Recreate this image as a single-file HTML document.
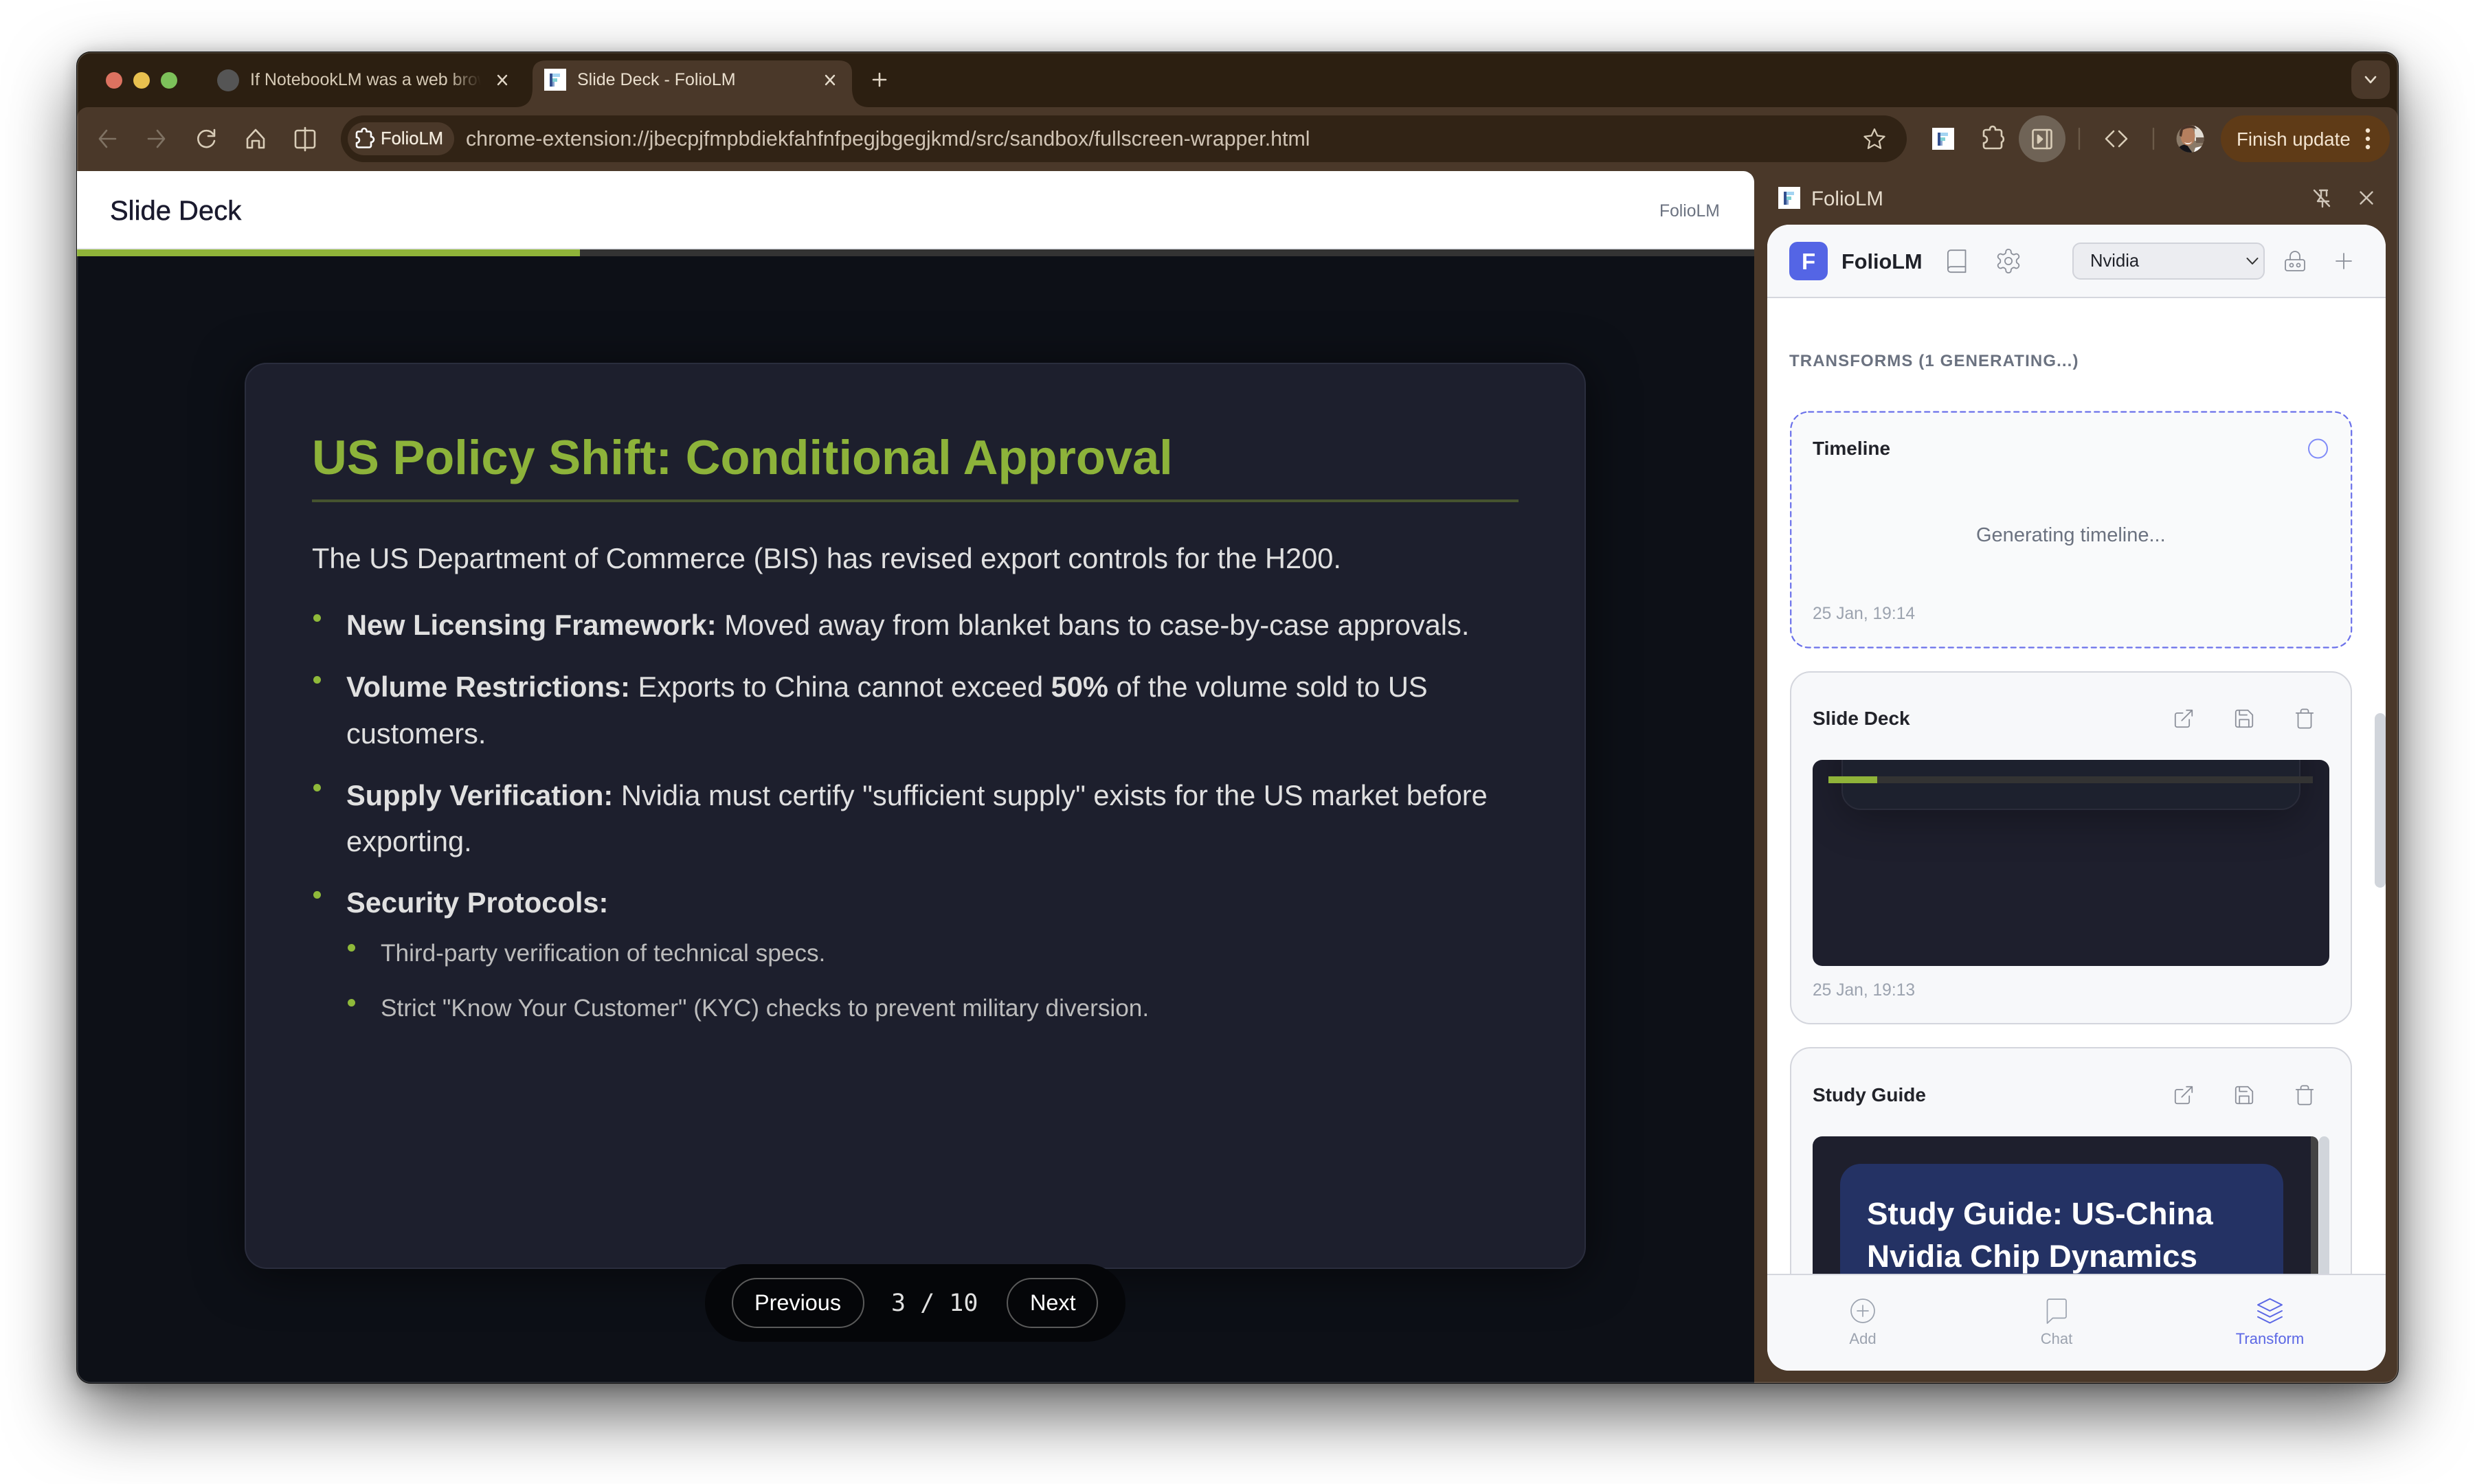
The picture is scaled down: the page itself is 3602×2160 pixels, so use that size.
<!DOCTYPE html>
<html lang="en"><head><meta charset="utf-8"><title>Slide Deck - FolioLM</title>
<style>
*{box-sizing:border-box;margin:0;padding:0}
html,body{width:3602px;height:2160px;background:#fff;overflow:hidden;font-family:"Liberation Sans",Arial,sans-serif}
.a{position:absolute}
.t{position:absolute;white-space:nowrap;line-height:1}
#win{position:absolute;left:112px;top:75px;width:3378px;height:1938px;border-radius:20px;overflow:hidden;background:#2c1f11;box-shadow:0 44px 100px rgba(0,0,0,.62),0 4px 24px rgba(0,0,0,.28)}
#in{position:absolute;left:-112px;top:-75px;width:3602px;height:2160px}
#edge{position:absolute;left:111px;top:75px;width:3380px;height:1939px;border-radius:21px;border:1.5px solid #111;box-shadow:inset 0 0 0 1.5px rgba(255,255,255,.16);pointer-events:none;z-index:30}
.bd{font-size:41.6px;color:#e0e0e0}
.bd b{font-weight:700}
.sub{font-size:35.2px;color:#bcbcbc}
.dot{position:absolute;width:11px;height:11px;border-radius:50%;background:#8fb93a}
.btn{position:absolute;border:2px solid #5a5a5a;border-radius:40px;height:73px;top:1860px}
.card{position:absolute;left:2605px;width:818px;border:2px solid #d4d6dd;border-radius:30px;background:#f7f8fa}
.ttl{font-size:28px;font-weight:700;color:#22232a}
.dt{font-size:24.6px;color:#9ca3af}
.lb{font-size:22px;color:#9ca3af;transform:translateX(-50%)}
</style></head><body>
<div id="win"><div id="in">
  <div class="a" style="left:112px;top:156px;width:3378px;height:100px;background:#4a3829;border-radius:16px 16px 0 0"></div>
  <div class="a" style="left:112px;top:240px;width:3378px;height:1780px;background:#4a3829"></div>

  <div class="a" style="left:3422px;top:88px;width:56px;height:56px;border-radius:16px;background:#4a3829"></div>

  <svg class="a" style="left:0;top:0" width="3602" height="200" viewBox="0 0 3602 200"><path d="M750 156Q775 156 775 128V106Q775 88 795 88H1220Q1240 88 1240 106V128Q1240 156 1265 156Z" fill="#4a3829"/></svg>

  <!-- omnibox -->
  <div class="a" style="left:496px;top:168px;width:2279px;height:68px;border-radius:34px;background:#312315"></div>
  <div class="a" style="left:506px;top:178px;width:155px;height:48px;border-radius:24px;background:#4a3829"></div>
  <div class="t" style="left:554px;top:190px;font-size:25.6px;color:#f3ebdd;-webkit-text-stroke:.3px #f3ebdd">FolioLM</div>
  <div class="t" style="left:678px;top:188px;font-size:30.36px;color:#cfc3b4">chrome-extension://jbecpjfmpbdiekfahfnfpegjbgegjkmd/src/sandbox/fullscreen-wrapper.html</div>

  <div class="a" style="left:2938px;top:168px;width:68px;height:68px;border-radius:50%;background:#6f6356"></div>
  <div class="a" style="left:3232px;top:168px;width:246px;height:68px;border-radius:34px;background:#5f3b17"></div>
  <div class="t" style="left:3255px;top:188.6px;font-size:27.6px;color:#f3e4d0">Finish update</div>

  <!-- tabs text -->
  <div class="t" style="left:364px;top:104px;width:336px;overflow:hidden;font-size:25px;color:#d6cab6;-webkit-mask-image:linear-gradient(90deg,#000 86%,transparent)">If NotebookLM was a web browser</div>
  <div class="t" style="left:840px;top:104px;font-size:25px;color:#eadfce">Slide Deck - FolioLM</div>

  <!-- main -->
  <div class="a" style="left:112px;top:249px;width:2441px;height:1780px;background:#0d1017;border-radius:0 16px 0 0;overflow:hidden">
    <div class="a" style="left:0;top:0;width:2441px;height:114px;background:#fff;border-bottom:2px solid #e5e7eb"></div>
    <div class="a" style="left:0;top:114px;width:2441px;height:10px;background:#333"></div>
    <div class="a" style="left:0;top:114px;width:732px;height:10px;background:#8fb339"></div>
  </div>
  <div class="t" style="left:160px;top:287px;font-size:40px;color:#1a1a2e;-webkit-text-stroke:.5px #1a1a2e">Slide Deck</div>
  <div class="t" style="left:2415px;top:296px;font-size:24.7px;color:#6b7280">FolioLM</div>

  <!-- slide -->
  <div class="a" style="left:356px;top:528px;width:1952px;height:1319px;border-radius:32px;background:#1d1f2d;border:2px solid #2a2d3d;box-shadow:0 8px 70px rgba(0,0,0,.55)"></div>
  <div class="t" style="left:454px;top:631.4px;font-size:70.4px;font-weight:700;color:#8db33a">US Policy Shift: Conditional Approval</div>
  <div class="a" style="left:454px;top:727px;width:1756px;height:4px;background:#46532f"></div>
  <div class="t bd" style="left:454px;top:791.8px">The US Department of Commerce (BIS) has revised export controls for the H200.</div>

  <div class="dot" style="left:456px;top:894px"></div>
  <div class="t bd" style="left:504px;top:888.8px"><b>New Licensing Framework:</b> Moved away from blanket bans to case-by-case approvals.</div>
  <div class="dot" style="left:456px;top:984px"></div>
  <div class="t bd" style="left:504px;top:978.8px"><b>Volume Restrictions:</b> Exports to China cannot exceed <b>50%</b> of the volume sold to US</div>
  <div class="t bd" style="left:504px;top:1046.8px">customers.</div>
  <div class="dot" style="left:456px;top:1141px"></div>
  <div class="t bd" style="left:504px;top:1136.8px"><b>Supply Verification:</b> Nvidia must certify "sufficient supply" exists for the US market before</div>
  <div class="t bd" style="left:504px;top:1203.8px">exporting.</div>
  <div class="dot" style="left:456px;top:1297px"></div>
  <div class="t bd" style="left:504px;top:1292.8px"><b>Security Protocols:</b></div>
  <div class="dot" style="left:506px;top:1374px"></div>
  <div class="t sub" style="left:554px;top:1370px">Third-party verification of technical specs.</div>
  <div class="dot" style="left:506px;top:1454px"></div>
  <div class="t sub" style="left:554px;top:1450px">Strict "Know Your Customer" (KYC) checks to prevent military diversion.</div>

  <!-- slide nav -->
  <div class="a" style="left:1026px;top:1840px;width:612px;height:113px;border-radius:56px;background:#050609"></div>
  <div class="btn" style="left:1065px;width:193px"></div>
  <div class="btn" style="left:1465px;width:133px"></div>
  <div class="t" style="left:1098px;top:1880px;font-size:32.4px;color:#fff">Previous</div>
  <div class="t" style="left:1499px;top:1880px;font-size:32.4px;color:#fff">Next</div>
  <div class="t" style="left:1297px;top:1880px;font-family:'DejaVu Sans Mono',monospace;font-size:35px;color:#e0e0e0;white-space:pre">3 / 10</div>

  <!-- side panel head -->
  <div class="t" style="left:2636px;top:274.5px;font-size:29.5px;color:#e6dccc">FolioLM</div>

  <!-- panel -->
  <div class="a" style="left:2572px;top:327px;width:900px;height:1668px;border-radius:32px;overflow:hidden;background:#fff">
   <div class="a" style="left:-2572px;top:-327px;width:3602px;height:2160px">
    <div class="a" style="left:2572px;top:327px;width:900px;height:107px;background:#f7f8fa;border-bottom:2px solid #d5d7de"></div>
    <div class="a" style="left:2604px;top:352px;width:56px;height:56px;border-radius:12px;background:#5465e5"></div>
    <div class="t" style="left:2622px;top:364px;font-size:33px;font-weight:700;color:#fff">F</div>
    <div class="t" style="left:2680px;top:365.5px;font-size:30.7px;font-weight:700;color:#1f2128">FolioLM</div>
    <div class="a" style="left:3016px;top:353px;width:280px;height:54px;border-radius:12px;background:#ecedf1;border:2px solid #d1d3da"></div>
    <div class="t" style="left:3042px;top:368px;font-size:25.6px;color:#1f2128">Nvidia</div>

    <div class="t" style="left:2604px;top:514px;font-size:24px;font-weight:700;letter-spacing:1.12px;color:#6b7280">TRANSFORMS (1 GENERATING...)</div>

    <div class="a" style="left:2605px;top:599px;width:818px;height:344px;border-radius:28px;background:#f9fafb"></div>
    <div class="t ttl" style="left:2638px;top:639px">Timeline</div>
    <div class="t" style="left:2876px;top:764.6px;font-size:29px;color:#6b7280">Generating timeline...</div>
    <div class="t dt" style="left:2638px;top:881.5px">25 Jan, 19:14</div>

    <div class="card" style="top:977px;height:514px"></div>
    <div class="t ttl" style="left:2638px;top:1032px">Slide Deck</div>
    <div class="a" style="left:2638px;top:1106px;width:752px;height:300px;border-radius:14px;background:#1e1f2d;overflow:hidden">
      <div class="a" style="left:42px;top:-40px;width:668px;height:113px;border-radius:0 0 28px 28px;background:#1d212e;border:2px solid #2a2c3a;box-shadow:0 12px 60px rgba(0,0,0,.32)"></div>
      <div class="a" style="left:23px;top:24px;width:705px;height:10px;background:#333"></div>
      <div class="a" style="left:23px;top:24px;width:71px;height:10px;background:#8fb339"></div>
    </div>
    <div class="t dt" style="left:2638px;top:1430px">25 Jan, 19:13</div>

    <div class="a" style="left:3456px;top:1038px;width:16px;height:254px;border-radius:8px;background:#d1d5db"></div>

    <div class="card" style="top:1524px;height:520px"></div>
    <div class="t ttl" style="left:2638px;top:1580px">Study Guide</div>
    <div class="a" style="left:3375px;top:1654px;width:15px;height:260px;border-radius:8px 8px 0 0;background:#d1d5db"></div>
    <div class="a" style="left:2638px;top:1654px;width:736px;height:260px;border-radius:14px 10px 0 0;background:#1e1f2d;overflow:hidden">
      <div class="a" style="left:725px;top:0;width:11px;height:260px;background:#444"></div>
      <div class="a" style="left:40px;top:40px;width:645px;height:240px;border-radius:30px 30px 0 0;background:#243264"></div>
    </div>
    <div class="t" style="left:2717px;top:1744px;font-size:45.8px;font-weight:700;color:#fff">Study Guide: US-China</div>
    <div class="t" style="left:2717px;top:1806px;font-size:45.8px;font-weight:700;color:#fff">Nvidia Chip Dynamics</div>

    <div class="a" style="left:2572px;top:1854px;width:900px;height:142px;background:#f7f8fa;border-top:2px solid #d5d7de"></div>
    <div class="t lb" style="left:2711px;top:1938px">Add</div>
    <div class="t lb" style="left:2993px;top:1938px">Chat</div>
    <div class="t lb" style="left:3303.5px;top:1938px;color:#5b67e5">Transform</div>
   </div>
  </div>
</div></div>
<div id="edge"></div>

<svg class="a" style="left:0;top:0;z-index:40" width="3602" height="2160" viewBox="0 0 3602 2160" fill="none" stroke-linecap="round" stroke-linejoin="round">
  <!-- traffic lights -->
  <circle cx="166" cy="117" r="12" fill="#dc7260"/><circle cx="206" cy="117" r="12" fill="#e8c04f"/><circle cx="246" cy="117" r="12" fill="#7dc15a"/>
  <circle cx="332" cy="117" r="16" fill="#555"/>
  <!-- tab -->
  <path d="M725 110l12 13M737 110l-12 13" stroke="#e0d5c5" stroke-width="2.4"/>
  <path d="M1202 110l12 13M1214 110l-12 13" stroke="#e6dccc" stroke-width="2.4"/>
  <path d="M1280 107v18M1271 116h18" stroke="#e0d5c5" stroke-width="2.6"/>
  <g id="fav"><rect x="792" y="100" width="32" height="32" fill="#fff"/><rect x="800" y="107" width="4" height="19" fill="#34508f"/><rect x="804" y="107" width="11" height="5" fill="#a3d4f2"/><rect x="804" y="114" width="7" height="5" fill="#7fd0d4"/><rect x="804" y="119" width="3" height="7" fill="#8aa4d0"/></g>
  <path d="M3443 112l7 8 7-8" stroke="#e6dccc" stroke-width="2.6"/>
  <!-- nav icons -->
  <g stroke="#7f7263" stroke-width="2.6"><path d="M168 202H145M155 190L145 202L155 214"/><path d="M216 202H239M229 190L239 202L229 214"/></g>
  <g stroke="#d9cdb8" stroke-width="2.6">
    <path d="M310 195A12 12 0 1 0 312 205M312 189V198H303"/>
    <path d="M360 202L372 189L384 202V215H377V205H367V215H360Z"/>
    <rect x="430" y="190" width="28" height="25" rx="3"/><path d="M444 186V219"/>
    <path d="M2728 188l4.300 9.500 10.300 1.200-7.700 6.900 2.200 10.200-9.100-5.200-9.100 5.200 2.200-10.200-7.700-6.900 10.300-1.200z" stroke-width="2.200"/>
    <path d="M2887 192a3 3 0 0 1 3-3h6v-1a4 4 0 0 1 8 0v1h6a3 3 0 0 1 3 3v6a5 5 0 0 1 0 9v6a3 3 0 0 1-3 3h-20a3 3 0 0 1-3-3v-5a5 5 0 0 0 0-10z"/>
    <rect x="2958.500" y="189" width="27" height="27" rx="2.500"/><path d="M2979 189V216"/><path d="M2966 197l6 5.500-6 5.500z" fill="#d9cdb8"/>
    <path d="M3076 191L3065 202L3076 213M3084 191L3095 202L3084 213"/>
  </g>
  <path d="M519 194a2.500 2.500 0 0 1 2.500-2.500h5v-1a3.500 3.500 0 0 1 7 0v1h4a2.500 2.500 0 0 1 2.500 2.500v5a4 4 0 0 1 0 8v5a2.500 2.500 0 0 1-2.500 2.500h-16a2.500 2.500 0 0 1-2.500-2.500v-4a4 4 0 0 0 0-8z" stroke="#fff" stroke-width="2.600"/>
  <rect x="2812" y="186" width="32" height="32" fill="#fff"/><rect x="2820" y="193" width="4" height="19" fill="#34508f"/><rect x="2824" y="193" width="11" height="5" fill="#a3d4f2"/><rect x="2824" y="200" width="7" height="5" fill="#7fd0d4"/><rect x="2824" y="205" width="3" height="7" fill="#8aa4d0"/>
  <path d="M3026 187V217M3134 187V217" stroke="#6b5a48" stroke-width="2.400"/>
  <!-- avatar -->
  <clipPath id="av"><circle cx="3187.500" cy="202" r="20"/></clipPath>
  <g clip-path="url(#av)">
    <rect x="3167" y="182" width="41" height="41" fill="#8a7a68"/>
    <rect x="3194" y="183" width="14" height="22" fill="#e2ddd4"/>
    <rect x="3196" y="200" width="12" height="8" fill="#6b5a4c"/>
    <path d="M3168 224c0-10 6-13 14-14l10 14z" fill="#15151a"/>
    <path d="M3192 224l3-9 12-3 2 12z" fill="#f4f4f4"/>
    <ellipse cx="3184" cy="198" rx="10.500" ry="14" fill="#b57f5e"/>
    <path d="M3172 198c-1-11 6-16 13-16 6 0 10 2 12 6-6-3-15-2-20 1l-2 10z" fill="#4a3428"/>
    <path d="M3179 207c4 2 8 2 11-1-1 4-8 6-11 1z" fill="#fff"/>
  </g>
  <circle cx="3446" cy="190" r="3.200" fill="#f3e4d0"/><circle cx="3446" cy="202" r="3.200" fill="#f3e4d0"/><circle cx="3446" cy="214" r="3.200" fill="#f3e4d0"/>
  <!-- side head -->
  <rect x="2588" y="272" width="32" height="32" fill="#fff"/><rect x="2596" y="279" width="4" height="19" fill="#34508f"/><rect x="2600" y="279" width="11" height="5" fill="#a3d4f2"/><rect x="2600" y="286" width="7" height="5" fill="#7fd0d4"/><rect x="2600" y="291" width="3" height="7" fill="#8aa4d0"/>
  <g stroke="#cfc5b8" stroke-width="2.400">
    <path d="M3368 277L3390 300"/><path d="M3376 277h11M3378 277v9l-5 7h16M3386 277v8M3380 293v8"/>
    <path d="M3435.500 279.500l17 17M3452.500 279.500l-17 17"/>
  </g>
  <!-- panel icons -->
  <g transform="translate(2828.500,361) scale(1.6)" stroke="#8b8f99" stroke-width="1.150"><path d="M4 19.500v-15A2.500 2.500 0 0 1 6.500 2H20v20H6.500a2.500 2.500 0 0 1 0-5H20"/></g>
  <g transform="translate(2902.600,359.600) scale(1.7)" stroke="#8b8f99" stroke-width="1.050"><path d="M12.220 2h-.44a2 2 0 0 0-2 2v.18a2 2 0 0 1-1 1.730l-.43.25a2 2 0 0 1-2 0l-.15-.08a2 2 0 0 0-2.730.73l-.22.38a2 2 0 0 0 .73 2.730l.15.1a2 2 0 0 1 1 1.720v.51a2 2 0 0 1-1 1.740l-.15.09a2 2 0 0 0-.73 2.730l.22.38a2 2 0 0 0 2.730.73l.15-.08a2 2 0 0 1 2 0l.43.25a2 2 0 0 1 1 1.730V20a2 2 0 0 0 2 2h.44a2 2 0 0 0 2-2v-.18a2 2 0 0 1 1-1.730l.43-.25a2 2 0 0 1 2 0l.15.08a2 2 0 0 0 2.730-.73l.22-.39a2 2 0 0 0-.73-2.730l-.15-.08a2 2 0 0 1-1-1.740v-.5a2 2 0 0 1 1-1.740l.15-.09a2 2 0 0 0 .73-2.730l-.22-.38a2 2 0 0 0-2.730-.73l-.15.08a2 2 0 0 1-2 0l-.43-.25a2 2 0 0 1-1-1.730V4a2 2 0 0 0-2-2z"/><circle cx="12" cy="12" r="3"/></g>
  <path d="M3270.500 376l7.500 8 7.500-8" stroke="#333" stroke-width="2"/>
  <g stroke="#8b8f99" stroke-width="1.800">
    <rect x="3326" y="378" width="28" height="16" rx="3"/><path d="M3333 378v-5a7 7 0 0 1 14 0v5"/><circle cx="3335" cy="386" r="2.500"/><circle cx="3345" cy="386" r="2.500"/>
    <path d="M3411 369v22M3400 380h22"/>
  </g>
  <rect x="2606.200" y="599.500" width="816" height="343" rx="26" stroke="#6b71ea" stroke-width="2.200" stroke-dasharray="7 6"/>
  <circle cx="3373.500" cy="653" r="13.500" stroke="#818cf8" stroke-width="2"/>
  <!-- action icons -->
  <defs>
    <g id="ex"><path d="M18 13v6a2 2 0 0 1-2 2H5a2 2 0 0 1-2-2V8a2 2 0 0 1 2-2h6M15 3h6v6M10 14L21 3"/></g>
    <g id="sv"><path d="M19 21H5a2 2 0 0 1-2-2V5a2 2 0 0 1 2-2h11l5 5v11a2 2 0 0 1-2 2zM17 21v-8H7v8M7 3v5h8"/></g>
    <g id="tr"><path d="M3 6h18M19 6v14a2 2 0 0 1-2 2H7a2 2 0 0 1-2-2V6m3 0V4a2 2 0 0 1 2-2h4a2 2 0 0 1 2 2v2"/></g>
  </defs>
  <g stroke="#8b8f99" stroke-width="1.300">
    <use href="#ex" transform="translate(3161.700,1029.700) scale(1.360)"/>
    <use href="#sv" transform="translate(3249.700,1029.700) scale(1.360)"/>
    <use href="#tr" transform="translate(3337.700,1029.700) scale(1.360)"/>
    <use href="#ex" transform="translate(3161.700,1577.700) scale(1.360)"/>
    <use href="#sv" transform="translate(3249.700,1577.700) scale(1.360)"/>
    <use href="#tr" transform="translate(3337.700,1577.700) scale(1.360)"/>
  </g>
  <!-- bottom nav icons -->
  <g stroke="#9ca3af" stroke-width="1.700">
    <circle cx="2711" cy="1908" r="17"/><path d="M2711 1900v16M2703 1908h16"/>
    <path d="M3007 1916a2.500 2.500 0 0 1-2.500 2.500h-17l-8 7.500v-32a3 3 0 0 1 3-3h22a2.500 2.500 0 0 1 2.500 2.500z"/>
  </g>
  <g transform="translate(3282.500,1887) scale(1.750)" stroke="#5b67e5" stroke-width="1.100"><path d="M12 2 2 7l10 5 10-5-10-5zM2 17l10 5 10-5M2 12l10 5 10-5"/></g>
</svg>
</body></html>
